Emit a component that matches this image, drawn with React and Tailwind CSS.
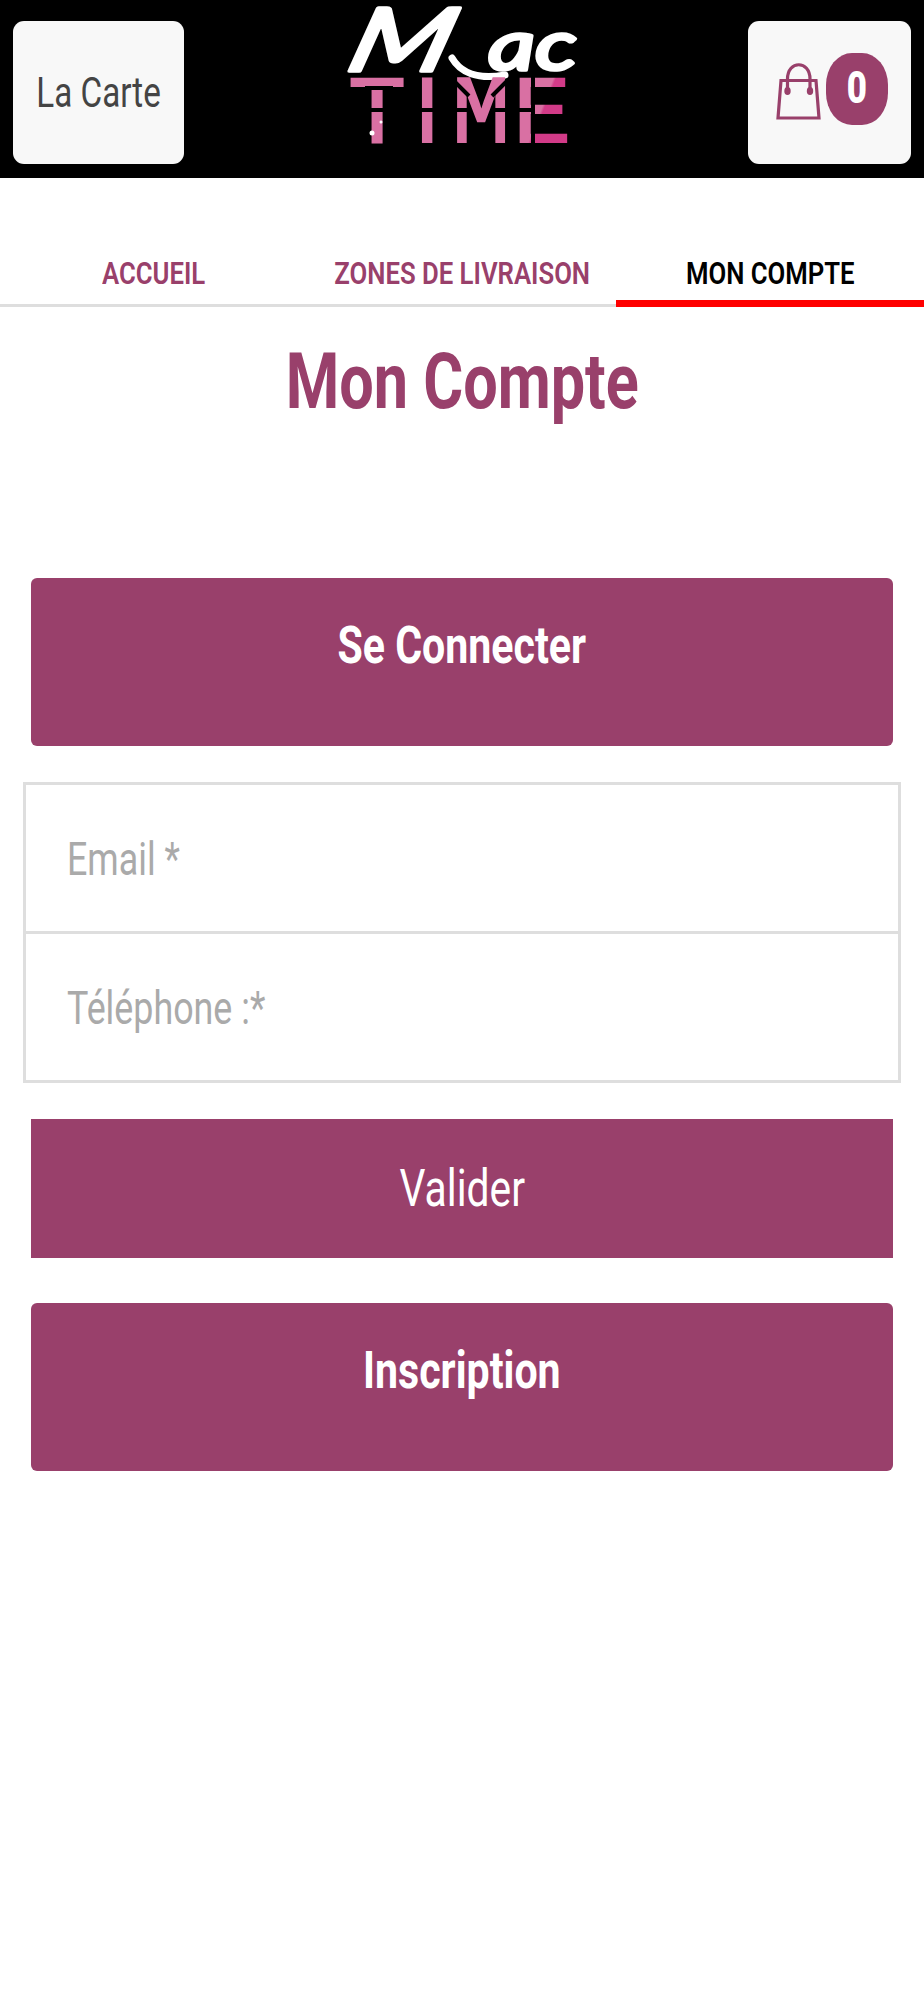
import React, { useState } from "react";
import clsx from "clsx";

const tabs = ["Accueil", "Zones de livraison", "Mon compte"];

// Condensed label, the box stays the natural width of the text
const Label = ({ className = "scale-x-[0.792]", children }) => (
    <span className={clsx("inline-block whitespace-nowrap", className)}>
        {children}
    </span>
);

const Logo = () => (
    <svg className="overflow-visible" width="260" height="160" viewBox="0 0 260 160" role="img" aria-label="Mac Time">
        <defs>
            <linearGradient id="pink" gradientUnits="userSpaceOnUse" x1="20" y1="60" x2="250" y2="150">
                <stop offset="0.79" stopColor="#d970a3" />
                <stop offset="0.8" stopColor="#d23b88" />
            </linearGradient>
        </defs>
        <g fontFamily="Lato, sans-serif" fontStyle="italic" fill="#fff" stroke="#fff" strokeWidth="3.500" strokeLinejoin="round">
            <text transform="translate(13 71) skewX(-16) scale(1.34 1)" fontSize="88">M</text>
            <text x="157" y="70" fontSize="70" textLength="89" lengthAdjust="spacingAndGlyphs">ac</text>
        </g>
        {/* swash under the name */}
        <path d="M121 58C129 72 146 80 174 75" fill="none" stroke="#fff" strokeWidth="7" strokeLinecap="round" />
        <text y="142" fontFamily="'Liberation Mono', monospace" fontSize="97" fill="url(#pink)" stroke="url(#pink)" strokeWidth="2">
            <tspan x="17">T</tspan>
            <tspan x="84" fontFamily="Roboto, sans-serif" fontSize="89">I</tspan>
            <tspan x="121">M</tspan>
            <tspan x="182">E</tspan>
        </text>
        {/* dark gaps that split the letters into display segments */}
        <g stroke="#000" strokeWidth="4" fill="none">
            <path d="M34 88H62M36 110H66M90 110H110M122 110H139M160 110H178M122 80L138 96M177 80L161 96M188 110H200M202 76V92M202 102V117M202 128V144" />
        </g>
        <g fill="#fff">
            <circle cx="41" cy="133" r="2.500" />
            <circle cx="50" cy="122" r="1.500" />
        </g>
    </svg>
);

const BagIcon = () => (
    <svg className="relative top-[2px]" width="46" height="58" viewBox="0 0 46 58" fill="none" stroke="#99406b" strokeWidth="3.200">
        <path d="M5 18.500H40L43 56H2Z" />
        <path d="M11.500 28V17C11.500 -2 34 -2 34 17V28" />
        <ellipse cx="11.500" cy="29" rx="3.200" ry="4" fill="#99406b" stroke="none" />
        <ellipse cx="34" cy="29" rx="3.200" ry="4" fill="#99406b" stroke="none" />
    </svg>
);

const Banner = ({ children }) => (
    <h2 className="mx-[31px] h-[168px] rounded-[6px] bg-[#99406b] text-center text-[51.500px] font-bold leading-[135px] text-white">
        <Label className="scale-x-[0.798]">{children}</Label>
    </h2>
);

const Field = ({ label, value, onChange }) => (
    <label className="relative flex h-[149px] items-center border-b-[3px] border-[#dedede] pl-[41px] pt-1">
        <input
            className="absolute inset-0 px-[41px] text-[36px] text-[#444] outline-none"
            value={value}
            onChange={onChange}
        />
        {!value && (
            <Label className="pointer-events-none relative origin-left scale-x-[0.787] text-[45.500px] text-[#aaa]">
                {label}
            </Label>
        )}
    </label>
);

const App = () => {
    const [active, setActive] = useState("Mon compte");
    const [email, setEmail] = useState("");
    const [phone, setPhone] = useState("");

    return (
        <div className="min-h-[2000px] w-full overflow-hidden bg-white font-[Roboto,sans-serif]">
            <header className="flex h-[178px] items-start justify-between bg-black px-[13px]">
                <button className="mt-[21px] flex h-[143px] w-[171px] items-center justify-center rounded-[11px] bg-[#f8f8f8] text-[42.500px] text-[#444]">
                    <Label className="scale-x-[0.782]">La Carte</Label>
                </button>
                <div className="mr-[11px]">
                    <Logo />
                </div>
                <button className="mt-[21px] flex h-[143px] w-[163px] items-center justify-center gap-[4px] rounded-[11px] bg-[#f8f8f8] pb-2 pl-1">
                    <BagIcon />
                    <span className="flex h-[72px] w-[62px] items-center justify-center rounded-[26px/32px] bg-[#99406b] pb-[2px] text-[44px] font-black text-white">
                        <Label>0</Label>
                    </span>
                </button>
            </header>

            <nav className="mt-[62px] grid h-[67px] grid-cols-3">
                {tabs.map((tab) => (
                    <button
                        key={tab}
                        onClick={() => setActive(tab)}
                        className={clsx(
                            "flex h-[67px] justify-center pt-[15px] text-[31.200px] font-semibold uppercase leading-[37px]",
                            active === tab
                                ? "border-b-[7px] border-[#ff0000] text-black"
                                : "border-b-[3px] border-[#dedede] text-[#99406b]"
                        )}
                    >
                        <Label className="scale-x-[0.824]">{tab}</Label>
                    </button>
                ))}
            </nav>

            <main>
                <h1 className="flex h-[150px] justify-center text-[78px] font-bold leading-[149px] text-[#99406b]">
                    <Label className="scale-x-[0.784]">Mon Compte</Label>
                </h1>

                <div className="mt-[121px]">
                    <Banner>Se Connecter</Banner>
                </div>

                <form onSubmit={(e) => e.preventDefault()}>
                    <div className="mx-[23px] mt-9 border-x-[3px] border-t-[3px] border-[#dedede]">
                        <Field label="Email *" value={email} onChange={(e) => setEmail(e.target.value)} />
                        <Field label="Téléphone :*" value={phone} onChange={(e) => setPhone(e.target.value)} />
                    </div>
                    <div className="mx-[31px] mt-9">
                        <button className="flex h-[139px] w-full items-center justify-center bg-[#99406b] text-[51.500px] text-white">
                            <Label>Valider</Label>
                        </button>
                    </div>
                </form>

                <div className="mt-[45px]">
                    <Banner>Inscription</Banner>
                </div>
            </main>
        </div>
    );
};

export default App;
